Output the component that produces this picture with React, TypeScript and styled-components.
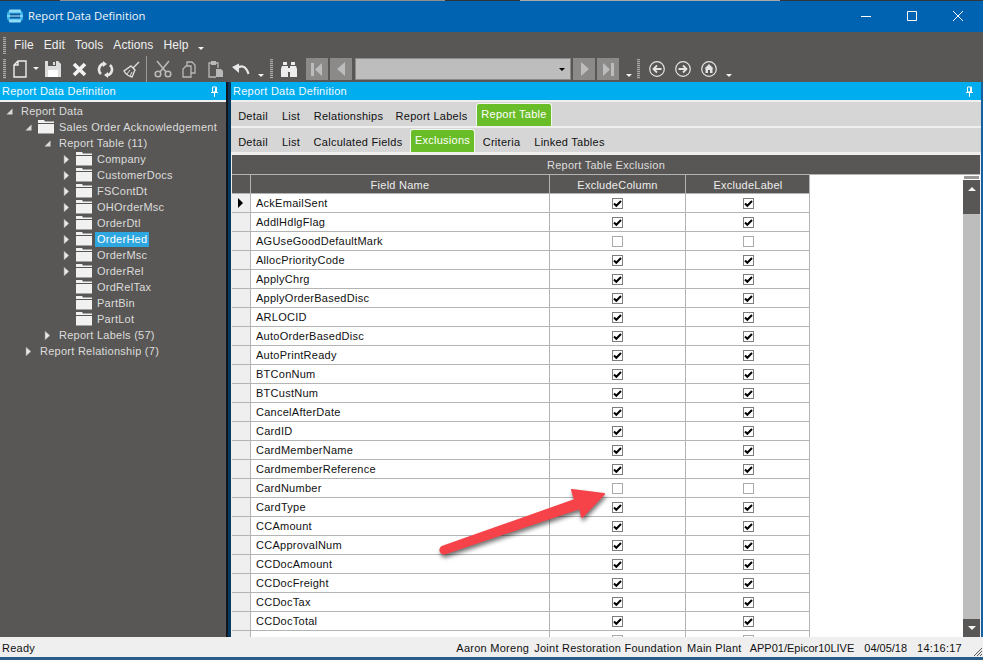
import React from "react";
import styled, { createGlobalStyle } from "styled-components";

const GlobalStyle = createGlobalStyle`
  html, body {
    margin: 0;
    padding: 0;
    height: 100%;
    overflow: hidden;
    background: #595755;
  }
  * {
    box-sizing: border-box;
  }
`;

const Window = styled.div`
  position: relative;
  width: 983px;
  height: 660px;
  display: flex;
  flex-direction: column;
  overflow: hidden;
  font-family: "Liberation Sans", Arial, sans-serif;
  font-size: 11px;
  letter-spacing: 0.26px;
  background: #595755;
`;

const TopEdge = styled.div`
  height: 1px;
  flex: none;
  background: linear-gradient(90deg, #33373b 0 60px, #8f8f8f 60px 445px, #2f3338 445px 520px, #a8a8a8 520px 780px, #33373b 780px);
`;

const TitleBar = styled.div`
  height: 31px;
  flex: none;
  display: flex;
  align-items: center;
  padding: 0 2px 2px 7px;
  background: #0063b1;
  color: #f2f6fa;
  font-family: "Open Sans", sans-serif;
  font-size: 11.25px;
  letter-spacing: 0;
`;

const TitleText = styled.span`
  margin-left: 5px;
  flex: 1;
`;

const WindowButton = styled.div`
  width: 46px;
  height: 29px;
  display: flex;
  align-items: center;
  justify-content: center;
`;

const MenuBar = styled.div`
  height: 24px;
  flex: none;
  display: flex;
  align-items: center;
  padding: 2px 0 0 3px;
  color: #f0f0f0;
  font-size: 12px;
  letter-spacing: 0.1px;
`;

const Grip = styled.div<{ $h: number; $ml?: number }>`
  width: 3px;
  height: ${(p) => p.$h}px;
  margin-left: ${(p) => p.$ml ?? 0}px;
  flex: none;
  background: repeating-linear-gradient(180deg, #a8a8a8 0 1px, #6a6866 1px 2px);
`;

const MenuItem = styled.span<{ $first?: boolean }>`
  margin-left: ${(p) => (p.$first ? 8 : 10)}px;
`;

const Toolbar = styled.div`
  height: 26px;
  flex: none;
  display: flex;
  align-items: center;
  padding-left: 3px;
`;

const ToolIcon = styled.div<{ $w: number; $ml: number }>`
  width: ${(p) => p.$w}px;
  height: 20px;
  margin-left: ${(p) => p.$ml}px;
  flex: none;
  display: flex;
  align-items: center;
  justify-content: center;
`;

const ToolSeparator = styled.div`
  width: 1px;
  height: 26px;
  margin-left: 6px;
  background: #9c9a98;
  flex: none;
`;

const NavButton = styled.div<{ $ml: number }>`
  width: 22px;
  height: 22px;
  margin-left: ${(p) => p.$ml}px;
  flex: none;
  display: flex;
  align-items: center;
  justify-content: center;
  background: #8c8a89;
`;

const Combo = styled.div`
  width: 216px;
  height: 22px;
  margin-left: 3px;
  flex: none;
  display: flex;
  align-items: center;
  justify-content: flex-end;
  padding-right: 5px;
  background: #bdbdbd;
  border: 1px solid #8c8a89;
`;

const Caret = styled.i<{ $color?: string; $ml: number; $mt?: number }>`
  display: block;
  flex: none;
  width: 0;
  height: 0;
  margin-left: ${(p) => p.$ml}px;
  margin-top: ${(p) => p.$mt ?? 0}px;
  border-left: 3px solid transparent;
  border-right: 3px solid transparent;
  border-top: 3px solid ${(p) => p.$color ?? "#f2f2f2"};
`;

const Workspace = styled.div`
  flex: 1;
  min-height: 0;
  display: flex;
`;

const LeftDock = styled.div`
  width: 226px;
  flex: none;
  display: flex;
  flex-direction: column;
`;

const Splitter = styled.div`
  width: 5px;
  flex: none;
  background: linear-gradient(90deg, #10161c 0 2px, #073a5e 2px);
`;

const RightDock = styled.div`
  flex: 1;
  min-width: 0;
  display: flex;
  flex-direction: column;
  background: #efefef;
  border-right: 2px solid #17609f;
`;

const DockHeader = styled.div`
  height: 18px;
  flex: none;
  display: flex;
  align-items: center;
  justify-content: space-between;
  padding: 0 7px 0 2px;
  background: #00adef;
  color: #f4fbff;
  font-size: 11px;
`;

const DockRule = styled.div`
  height: 2px;
  flex: none;
  background: #efefef;
`;

const Tree = styled.div`
  flex: 1;
  padding-top: 1px;
  color: #dcdcdc;
`;

const TreeRow = styled.div<{ $level: number }>`
  height: 16px;
  display: flex;
  align-items: center;
  padding-left: ${(p) => 6 + p.$level * 19}px;
`;

const Toggle = styled.div`
  width: 13px;
  flex: none;
  display: flex;
  align-items: center;
`;

const FolderSlot = styled.div`
  width: 16px;
  height: 14px;
  margin-right: 3px;
  flex: none;
`;

const TreeLabel = styled.span<{ $selected?: boolean }>`
  height: 15px;
  line-height: 15px;
  padding: 0 2px;
  white-space: nowrap;
  background: ${(p) => (p.$selected ? "#2ea6e0" : "transparent")};
  color: ${(p) => (p.$selected ? "#ffffff" : "inherit")};
`;

const TabStrip = styled.div`
  height: 24px;
  flex: none;
  display: flex;
  align-items: flex-end;
  background: #d6d6d6;
  margin-bottom: 2px;
  color: #111;
`;

const Tab = styled.div<{ $active?: boolean; $ml?: number; $w: number }>`
  height: ${(p) => (p.$active ? 23 : 24)}px;
  margin-left: ${(p) => p.$ml ?? 0}px;
  width: ${(p) => p.$w}px;
  flex: none;
  display: flex;
  align-items: center;
  justify-content: center;
  white-space: nowrap;
  padding: ${(p) => (p.$active ? "0 0 3px" : "4px 0 0")};
  background: ${(p) => (p.$active ? "#69bd28" : "transparent")};
  color: ${(p) => (p.$active ? "#ffffff" : "inherit")};
  border: ${(p) => (p.$active ? "1px solid #f2f7ee" : "none")};
  border-bottom: none;
  border-radius: ${(p) => (p.$active ? "3px 3px 0 0" : "0")};
`;

const GridPane = styled.div`
  flex: 1;
  min-height: 0;
  margin: 1px 1px 0 1px;
  display: flex;
  flex-direction: column;
  overflow: hidden;
`;

const Caption = styled.div`
  height: 20px;
  flex: none;
  display: flex;
  align-items: center;
  justify-content: center;
  background: #595755;
  color: #dedede;
  border-bottom: 1px solid #b4b4b4;
`;

const GridBody = styled.div`
  flex: 1;
  min-height: 0;
  display: flex;
`;

const Sheet = styled.div`
  flex: 1;
  min-width: 0;
  background: #fff;
  overflow: hidden;
`;

const Row = styled.div<{ $head?: boolean }>`
  width: 578px;
  height: 19px;
  display: grid;
  grid-template-columns: 19px 299px 136px 124px;
  border-bottom: 1px solid #b4b4b4;
  border-right: 1px solid #b4b4b4;
  background: ${(p) => (p.$head ? "#595755" : "#fff")};
  color: ${(p) => (p.$head ? "#ededed" : "#111")};
`;

const Cell = styled.div<{ $center?: boolean; $head?: boolean }>`
  display: flex;
  align-items: center;
  justify-content: ${(p) => (p.$center ? "center" : "flex-start")};
  padding-left: ${(p) => (p.$center ? 0 : 5)}px;
  padding-top: ${(p) => (p.$head ? 2 : 0)}px;
  border-right: 1px solid #b4b4b4;
  white-space: nowrap;
  &:last-child {
    border-right: none;
  }
`;

const Indicator = styled.div`
  display: flex;
  align-items: center;
  padding-left: 6px;
  background: #efefef;
  border-right: 1px solid #b4b4b4;
`;

const HeadIndicator = styled.div`
  border-right: 1px solid #b4b4b4;
`;

const RowMark = styled.i`
  display: block;
  width: 0;
  height: 0;
  border-top: 5px solid transparent;
  border-bottom: 5px solid transparent;
  border-left: 5px solid #000;
`;

const CheckBox = styled.div<{ $on: boolean }>`
  width: 11px;
  height: 11px;
  display: flex;
  align-items: center;
  justify-content: center;
  background: #fff;
  border: 1px solid ${(p) => (p.$on ? "#7d7d7d" : "#ababab")};
`;

const Scroller = styled.div`
  width: 17px;
  flex: none;
  display: flex;
  flex-direction: column;
  background: #bdbdbd;
`;

const ScrollCap = styled.div`
  height: 5px;
  flex: none;
  background: #fff;
  padding: 1px;
  &::before {
    content: "";
    display: block;
    height: 3px;
    background: #9a9896;
  }
`;

const ScrollThumb = styled.div`
  height: 34px;
  flex: none;
  display: flex;
  justify-content: center;
  padding-top: 7px;
  background: #595755;
`;

const ScrollTrack = styled.div`
  flex: 1;
`;

const ScrollDown = styled.div`
  height: 18px;
  flex: none;
  display: flex;
  align-items: center;
  justify-content: center;
  background: #595755;
`;

const UpCaret = styled.i`
  display: block;
  width: 0;
  height: 0;
  border-left: 4px solid transparent;
  border-right: 4px solid transparent;
  border-bottom: 4px solid #f5f5f5;
`;

const DownCaret = styled.i`
  display: block;
  width: 0;
  height: 0;
  border-left: 4px solid transparent;
  border-right: 4px solid transparent;
  border-top: 4px solid #f5f5f5;
`;

const StatusBar = styled.div`
  position: relative;
  height: 23px;
  flex: none;
  display: flex;
  align-items: flex-start;
  padding: 5px 21px 0 2px;
  background: #efefef;
  border-bottom: 3px solid #2a5c8a;
  color: #111;
`;

const StatusItem = styled.span<{ $ml: number; $tight?: boolean }>`
  margin-left: ${(p) => p.$ml}px;
  white-space: nowrap;
  letter-spacing: ${(p) => (p.$tight ? 0 : 0.26)}px;
`;

const Spacer = styled.div`
  flex: 1;
`;

const ResizeGrip = styled.svg`
  position: absolute;
  right: 0;
  bottom: 0;
`;

const ArrowOverlay = styled.svg`
  position: absolute;
  left: 430px;
  top: 480px;
  pointer-events: none;
  filter: drop-shadow(1px 3px 2px rgba(0, 0, 0, 0.55));
`;

const Logo = () => (
  <svg width="16" height="14" viewBox="0 0 16 14">
    <rect x="0" y="2" width="16" height="10" rx="3" fill="#3fb4e8" />
    <rect x="2" y="0.5" width="12" height="3" rx="1.2" fill="#8fdcf7" />
    <rect x="2" y="10.5" width="12" height="3" rx="1.2" fill="#8fdcf7" />
    <rect x="3" y="4.5" width="10" height="5" fill="#0a5aa0" />
    <path d="M0 7h16" stroke="#bdeeff" strokeWidth="1" />
  </svg>
);

const Pin = () => (
  <svg width="9" height="11" viewBox="0 0 9 11">
    <path d="M2.5 1h4v5h-4zM1 6.5h7M4.5 7v4M5.5 1.5v4.5" fill="none" stroke="#fff" strokeWidth="1" />
  </svg>
);

const Folder = () => (
  <svg width="16" height="14" viewBox="0 0 16 14">
    <path d="M0 0h6l1 1.5h9v1.5H0z" fill="#f1f1f1" />
    <path d="M0 4h16v9.5H0z" fill="#f1f1f1" />
  </svg>
);

const Expand = () => (
  <svg width="7" height="11" viewBox="0 0 7 11">
    <path d="M1 1l5 4.5L1 10z" fill="#e8e8e8" stroke="#8d8d8d" strokeWidth="0.6" />
  </svg>
);

const Collapse = () => (
  <svg width="7" height="7" viewBox="0 0 7 7">
    <path d="M6.5 0.5v6h-6z" fill="#dadada" />
  </svg>
);

const Check = () => (
  <svg width="9" height="9" viewBox="0 0 9 9">
    <path d="M1 4.500l2.300 2.300L8 2" fill="none" stroke="#000" strokeWidth="2" />
  </svg>
);

const stroke = "#ededed";
const dim = "#b9b9b9";

const NewIcon = () => (
  <svg width="14" height="18" viewBox="0 0 14 18">
    <path d="M5 1h8v16H1V5zM5 1v4H1" fill="none" stroke={stroke} strokeWidth="1.4" />
  </svg>
);
const SaveIcon = () => (
  <svg width="16" height="16" viewBox="0 0 16 16">
    <path d="M0 0h13l3 3v13H0z" fill="#dcdcdc" />
    <path d="M3 0h8v5H3z" fill="#595755" />
    <path d="M3 9h10v7H3z" fill="#fff" />
    <path d="M8 1h2v3H8z" fill="#dcdcdc" />
  </svg>
);
const CloseIcon = () => (
  <svg width="15" height="15" viewBox="0 0 15 15">
    <path d="M2 2l11 11M13 2L2 13" stroke="#f2f2f2" strokeWidth="3.6" />
  </svg>
);
const RefreshIcon = () => (
  <svg width="17" height="17" viewBox="0 0 17 17">
    <path d="M4 13A6 6 0 0 1 7 2.600M13 4a6 6 0 0 1-3 10.400" fill="none" stroke="#e6e6e6" strokeWidth="2.600" />
    <path d="M6 0l4 3-4 3zM11 17l-4-3 4-3z" fill="#e6e6e6" />
  </svg>
);
const BroomIcon = () => (
  <svg width="17" height="17" viewBox="0 0 17 17">
    <path d="M16 1l-6 6M8 5l4 4-3 7c-3-.5-6-2.500-8-6z" fill="none" stroke="#dedede" strokeWidth="1.400" />
    <path d="M4 13l3-4M7 15l2-4" stroke="#dedede" strokeWidth="1" />
  </svg>
);
const CutIcon = () => (
  <svg width="18" height="18" viewBox="0 0 18 18">
    <path d="M3 1l9 11M15 1L6 12" stroke={dim} strokeWidth="1.600" />
    <circle cx="4" cy="14" r="2.800" fill="none" stroke={dim} strokeWidth="1.600" />
    <circle cx="14" cy="14" r="2.800" fill="none" stroke={dim} strokeWidth="1.600" />
  </svg>
);
const CopyIcon = () => (
  <svg width="14" height="17" viewBox="0 0 14 17">
    <path d="M5 5V1h5l3 3v8H9" fill="none" stroke={dim} strokeWidth="1.300" />
    <path d="M4 5h5v11H1V8z" fill="none" stroke={dim} strokeWidth="1.300" />
  </svg>
);
const PasteIcon = () => (
  <svg width="16" height="18" viewBox="0 0 16 18">
    <path d="M3 3H1v14h7M10 8V3h-2" fill="none" stroke={dim} strokeWidth="1.300" />
    <path d="M3 1h5v4H3z" fill={dim} />
    <path d="M8 9h5l2 2v6H8z" fill={dim} />
  </svg>
);
const UndoIcon = () => (
  <svg width="18" height="13" viewBox="0 0 18 13">
    <path d="M5 5.500c4-3.500 9-3 11.500 5.500" fill="none" stroke="#e8e8e8" strokeWidth="2.200" />
    <path d="M0 4l7-3.500v9.500z" fill="#e8e8e8" />
  </svg>
);
const BinocularsIcon = () => (
  <svg width="16" height="15" viewBox="0 0 16 15">
    <path d="M2 0h4v3H2zM10 0h4v3h-4z" fill="#ececec" />
    <path d="M1 4h6v11H0V7zM9 4h6l1 3v8H9zM7 6h2v4H7z" fill="#ececec" />
  </svg>
);
const NavFirst = () => (
  <svg width="12" height="13" viewBox="0 0 12 13">
    <path d="M0 0h3v13H0zM11 0v13L4 6.500z" fill="#bcbcbc" />
  </svg>
);
const NavPrev = () => (
  <svg width="9" height="14" viewBox="0 0 9 14">
    <path d="M8 0v14L0 7z" fill="#bcbcbc" />
  </svg>
);
const NavNext = () => (
  <svg width="9" height="14" viewBox="0 0 9 14">
    <path d="M1 0v14l8-7z" fill="#bcbcbc" />
  </svg>
);
const NavLast = () => (
  <svg width="12" height="13" viewBox="0 0 12 13">
    <path d="M9 0h3v13H9zM1 0v13l7-6.500z" fill="#bcbcbc" />
  </svg>
);
const CircleBack = () => (
  <svg width="16" height="16" viewBox="0 0 16 16">
    <circle cx="8" cy="8" r="7.300" fill="none" stroke="#e4e4e4" strokeWidth="1.200" />
    <path d="M12.500 8H5M8 4.500L4.500 8 8 11.500" fill="none" stroke="#e4e4e4" strokeWidth="1.800" />
  </svg>
);
const CircleForward = () => (
  <svg width="16" height="16" viewBox="0 0 16 16">
    <circle cx="8" cy="8" r="7.300" fill="none" stroke="#e4e4e4" strokeWidth="1.200" />
    <path d="M3.500 8H11M8 4.500L11.500 8 8 11.500" fill="none" stroke="#e4e4e4" strokeWidth="1.800" />
  </svg>
);
const CircleHome = () => (
  <svg width="16" height="16" viewBox="0 0 16 16">
    <circle cx="8" cy="8" r="7.300" fill="none" stroke="#e4e4e4" strokeWidth="1.200" />
    <path d="M8 3l4.500 4.500H11.500V12H9V9H7v3H4.500V7.500H3.500z" fill="#e4e4e4" />
  </svg>
);

const treeItems: { label: string; level: number; toggle?: "open" | "closed"; folder?: boolean; selected?: boolean }[] = [
  { label: "Report Data", level: 0, toggle: "open" },
  { label: "Sales Order Acknowledgement", level: 1, toggle: "open", folder: true },
  { label: "Report Table (11)", level: 2, toggle: "open" },
  { label: "Company", level: 3, toggle: "closed", folder: true },
  { label: "CustomerDocs", level: 3, toggle: "closed", folder: true },
  { label: "FSContDt", level: 3, toggle: "closed", folder: true },
  { label: "OHOrderMsc", level: 3, toggle: "closed", folder: true },
  { label: "OrderDtl", level: 3, toggle: "closed", folder: true },
  { label: "OrderHed", level: 3, toggle: "closed", folder: true, selected: true },
  { label: "OrderMsc", level: 3, toggle: "closed", folder: true },
  { label: "OrderRel", level: 3, toggle: "closed", folder: true },
  { label: "OrdRelTax", level: 3, folder: true },
  { label: "PartBin", level: 3, folder: true },
  { label: "PartLot", level: 3, folder: true },
  { label: "Report Labels (57)", level: 2, toggle: "closed" },
  { label: "Report Relationship (7)", level: 1, toggle: "closed" },
];

const fields = [
  "AckEmailSent",
  "AddlHdlgFlag",
  "AGUseGoodDefaultMark",
  "AllocPriorityCode",
  "ApplyChrg",
  "ApplyOrderBasedDisc",
  "ARLOCID",
  "AutoOrderBasedDisc",
  "AutoPrintReady",
  "BTConNum",
  "BTCustNum",
  "CancelAfterDate",
  "CardID",
  "CardMemberName",
  "CardmemberReference",
  "CardNumber",
  "CardType",
  "CCAmount",
  "CCApprovalNum",
  "CCDocAmount",
  "CCDocFreight",
  "CCDocTax",
  "CCDocTotal",
  "",
];

const unchecked = ["AGUseGoodDefaultMark", "CardNumber", ""];

function App() {
  return (
    <Window>
      <GlobalStyle />
      <TopEdge />
      <TitleBar>
        <Logo />
        <TitleText>Report Data Definition</TitleText>
        <WindowButton>
          <svg width="10" height="10" viewBox="0 0 10 10">
            <path d="M0 5.500h10" stroke="#fff" strokeWidth="1" />
          </svg>
        </WindowButton>
        <WindowButton>
          <svg width="10" height="10" viewBox="0 0 10 10">
            <path d="M.5.500h9v9h-9z" fill="none" stroke="#fff" strokeWidth="1" />
          </svg>
        </WindowButton>
        <WindowButton>
          <svg width="10" height="10" viewBox="0 0 10 10">
            <path d="M0 0l10 10M10 0L0 10" stroke="#fff" strokeWidth="1" />
          </svg>
        </WindowButton>
      </TitleBar>

      <MenuBar>
        <Grip $h={17} />
        <MenuItem $first>File</MenuItem>
        <MenuItem>Edit</MenuItem>
        <MenuItem>Tools</MenuItem>
        <MenuItem>Actions</MenuItem>
        <MenuItem>Help</MenuItem>
        <Caret $ml={9} $mt={7} />
      </MenuBar>

      <Toolbar>
        <Grip $h={20} />
        <ToolIcon $w={14} $ml={7}><NewIcon /></ToolIcon>
        <Caret $ml={6} $mt={-2} />
        <ToolIcon $w={16} $ml={6}><SaveIcon /></ToolIcon>
        <ToolIcon $w={15} $ml={11}><CloseIcon /></ToolIcon>
        <ToolIcon $w={17} $ml={10}><RefreshIcon /></ToolIcon>
        <ToolIcon $w={17} $ml={9}><BroomIcon /></ToolIcon>
        <ToolSeparator />
        <ToolIcon $w={18} $ml={7}><CutIcon /></ToolIcon>
        <ToolIcon $w={14} $ml={10}><CopyIcon /></ToolIcon>
        <ToolIcon $w={16} $ml={12}><PasteIcon /></ToolIcon>
        <ToolIcon $w={18} $ml={8}><UndoIcon /></ToolIcon>
        <Caret $ml={8} $mt={12} />
        <Grip $h={20} $ml={6} />
        <ToolIcon $w={16} $ml={8}><BinocularsIcon /></ToolIcon>
        <NavButton $ml={9}><NavFirst /></NavButton>
        <NavButton $ml={2}><NavPrev /></NavButton>
        <Combo><Caret $ml={0} $color="#000" /></Combo>
        <NavButton $ml={2}><NavNext /></NavButton>
        <NavButton $ml={2}><NavLast /></NavButton>
        <Caret $ml={7} $mt={12} />
        <Grip $h={20} $ml={5} />
        <ToolIcon $w={16} $ml={9}><CircleBack /></ToolIcon>
        <ToolIcon $w={16} $ml={10}><CircleForward /></ToolIcon>
        <ToolIcon $w={16} $ml={10}><CircleHome /></ToolIcon>
        <Caret $ml={9} $mt={12} />
      </Toolbar>

      <Workspace>
        <LeftDock>
          <DockHeader>
            Report Data Definition
            <Pin />
          </DockHeader>
          <DockRule />
          <Tree>
            {treeItems.map((item) => (
              <TreeRow key={item.label} $level={item.level}>
                <Toggle>
                  {item.toggle === "open" && <Collapse />}
                  {item.toggle === "closed" && <Expand />}
                </Toggle>
                {item.folder && (
                  <FolderSlot>
                    <Folder />
                  </FolderSlot>
                )}
                <TreeLabel $selected={item.selected}>{item.label}</TreeLabel>
              </TreeRow>
            ))}
          </Tree>
        </LeftDock>

        <Splitter />

        <RightDock>
          <DockHeader>
            Report Data Definition
            <Pin />
          </DockHeader>
          <DockRule />
          <TabStrip>
            <Tab $w={44}>Detail</Tab>
            <Tab $w={32}>List</Tab>
            <Tab $w={83}>Relationships</Tab>
            <Tab $w={83}>Report Labels</Tab>
            <Tab $active $w={76} $ml={3}>Report Table</Tab>
          </TabStrip>
          <TabStrip>
            <Tab $w={44}>Detail</Tab>
            <Tab $w={32}>List</Tab>
            <Tab $w={102}>Calculated Fields</Tab>
            <Tab $active $w={65} $ml={1}>Exclusions</Tab>
            <Tab $w={53}>Criteria</Tab>
            <Tab $w={83}>Linked Tables</Tab>
          </TabStrip>
          <GridPane>
            <Caption>Report Table Exclusion</Caption>
            <GridBody>
              <Sheet>
                <Row $head>
                  <HeadIndicator />
                  <Cell $center $head>Field Name</Cell>
                  <Cell $center $head>ExcludeColumn</Cell>
                  <Cell $center $head>ExcludeLabel</Cell>
                </Row>
                {fields.map((name, i) => {
                  const on = !unchecked.includes(name);
                  return (
                    <Row key={name || "partial"}>
                      <Indicator>{i === 0 && <RowMark />}</Indicator>
                      <Cell>{name}</Cell>
                      <Cell $center>
                        <CheckBox $on={on}>{on && <Check />}</CheckBox>
                      </Cell>
                      <Cell $center>
                        <CheckBox $on={on}>{on && <Check />}</CheckBox>
                      </Cell>
                    </Row>
                  );
                })}
              </Sheet>
              <Scroller>
                <ScrollCap />
                <ScrollThumb>
                  <UpCaret />
                </ScrollThumb>
                <ScrollTrack />
                <ScrollDown>
                  <DownCaret />
                </ScrollDown>
              </Scroller>
            </GridBody>
          </GridPane>
        </RightDock>
      </Workspace>

      <StatusBar>
        <span>Ready</span>
        <Spacer />
        <StatusItem $ml={0}>Aaron Moreng</StatusItem>
        <StatusItem $ml={5}>Joint Restoration Foundation</StatusItem>
        <StatusItem $ml={5}>Main Plant</StatusItem>
        <StatusItem $ml={8} $tight>APP01/Epicor10LIVE</StatusItem>
        <StatusItem $ml={10} $tight>04/05/18</StatusItem>
        <StatusItem $ml={10}>14:16:17</StatusItem>
        <ResizeGrip width="10" height="10" viewBox="0 0 10 10">
          <path d="M9 1L1 9M9 4L4 9M9 7L7 9" stroke="#555" strokeWidth="1" />
        </ResizeGrip>
      </StatusBar>

      <ArrowOverlay width="190" height="80" viewBox="0 0 190 80">
        <path
          d="M12 67 L145 20 L142 10 L174 14 L152 37 L150 28 L16 73 A3.500 3.500 0 0 1 12 67 Z"
          fill="#f64349"
          stroke="#f64349"
          strokeWidth="2"
          strokeLinejoin="round"
        />
      </ArrowOverlay>
    </Window>
  );
}

export default App;
